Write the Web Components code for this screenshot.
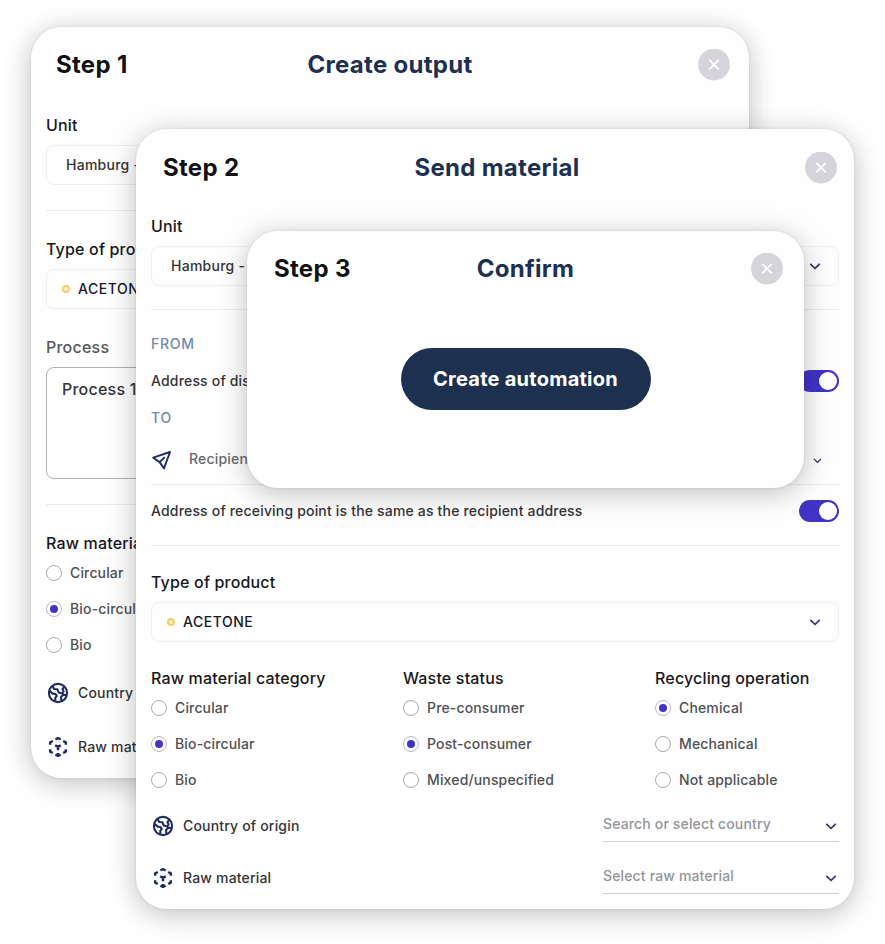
<!DOCTYPE html>
<html lang="en">
<head>
<meta charset="utf-8">
<title>Create automation</title>
<style>
  html, body { margin: 0; padding: 0; }
  body {
    position: relative;
    width: 885px;
    height: 944px;
    overflow: hidden;
    background: #fff;
    font-family: Inter, "Liberation Sans", sans-serif;
    --navy: #1d3050;
    --violet: #4033c6;
    --line: #ececef;
  }
  /* the three dialogs are stacked like windows */
  step-dialog { position: absolute; }
  #create { left: 31px; top: 27px; width: 718px; height: 751px; --head: 75px; --step-x: 25px; --close-x: 19px; }
  #send { left: 136px; top: 129px; width: 718px; height: 780px; --head: 77px; --step-x: 27px; --close-x: 17px; --title-shift: 4px; }
  #confirm { left: 247px; top: 231px; width: 557px; height: 257px; --head: 75px; --step-x: 27px; --close-x: 21px; }
</style>
</head>
<body>

<template id="tmpl-step-dialog">
  <style>
  :host {
    display: flex;
    flex-flow: column nowrap;
    box-sizing: border-box;
    border-radius: 31px;
    background: #fefefe;
    box-shadow: 0 0 3px rgba(30, 20, 40, 0.1), 0 5px 28px rgba(20, 15, 25, 0.27);
  }
  header {
    display: grid;
    grid-template-columns: 1fr auto 1fr;
    align-items: center;
    flex: none;
    height: var(--head);
    padding: 0 var(--close-x) 0 var(--step-x);
    font-size: 24px;
    font-weight: 700;
    line-height: 30px;
  }
  .step { color: #121214; letter-spacing: 0.3px; }
  .title {
    color: var(--navy);
    letter-spacing: 0.3px;
    /* the side paddings differ, this brings the title back to the middle */
    margin-right: calc(var(--step-x) - var(--close-x) - var(--title-shift, 0px));
  }
  .close {
    justify-self: end;
    display: block;
    width: 32px;
    height: 32px;
  }
  .body {
    flex: 1;
    display: flex;
    flex-flow: column nowrap;
    padding: 0 15px;
  }
  </style>
  <header>
    <span class="step"></span>
    <span class="title"></span>
    <svg class="close" viewBox="0 0 32 32">
      <circle cx="16" cy="15.5" r="16" fill="#d6d3db" style="r: 15.9px"/>
      <path d="M11.2 10.8l9.6 9.6M20.8 10.8l-9.6 9.6" stroke="#fff" stroke-width="1.9" fill="none"/>
    </svg>
  </header>
  <div class="body"><slot></slot></div>
</template>

<template id="tmpl-form-label">
  <style>
  :host {
    display: block;
    flex: none;
    height: 24px;
    margin-top: var(--gap, 24px);
    line-height: 24px;
    font-size: 16px;
    font-weight: 500;
    letter-spacing: 0.17px;
    color: #17171a;
    white-space: nowrap;
  }
  :host([muted]) { color: #55555a; font-weight: 450; letter-spacing: 0.22px; }
  :host([section]) { font-size: 14px; font-weight: 450; letter-spacing: 0.75px; color: #6f8ab0; }
  </style>
  <slot></slot>
</template>

<template id="tmpl-form-rule">
  <style>
  :host {
    display: block;
    flex: none;
    height: 1px;
    margin-top: var(--gap, 0px);
    background: var(--line);
  }
  </style>
</template>

<template id="tmpl-chevron">
  <style>
  :host { display: block; flex: none; width: 12px; height: 12px; }
  :host([small]) { width: 9px; height: 9px; }
  svg { display: block; width: 100%; height: 100%; }
  </style>
  <svg viewBox="0 0 12 12"><path d="M1.2 3.8L6 8.4l4.8-4.6" fill="none" stroke="#393268" stroke-width="1.6"/></svg>
</template>

<template id="tmpl-form-field">
  <style>
  :host {
    display: flex;
    flex: none;
    align-items: center;
    box-sizing: border-box;
    height: 40px;
    margin: 8px 0 0 0;
    padding: 0 17px 0 19px;
    border: 1px solid #efeff3;
    border-radius: 8px;
    font-size: 14px;
    font-weight: 450;
    letter-spacing: 0.25px;
    color: #333337;
    white-space: nowrap;
  }
  .text { margin-top: -2px; }
  :host([product]) { color: #17172c; padding-left: 15px; letter-spacing: 0.53px; }
  :host([area]) {
    align-items: flex-start;
    height: 112px;
    padding: 11px 15px;
    border-color: #b0b0b4;
    font-size: 16px;
    line-height: 24px;
    letter-spacing: 0.22px;
  }
  .dot { display: none; box-sizing: border-box; width: 8px; height: 8px; margin-right: 8px; border: 2px solid #fbcb66; border-radius: 50%; background: #fff3d6; }
  :host([product]) .dot { display: block; }
  chevron-icon { margin-left: auto; }
  :host([area]) chevron-icon { display: none; }
  </style>
  <span class="dot"></span>
  <span class="text"><slot></slot></span>
  <chevron-icon></chevron-icon>
</template>

<template id="tmpl-form-switch">
  <style>
  :host {
    display: flex;
    flex: none;
    align-items: center;
    justify-content: space-between;
    height: 36px;
    margin-top: var(--gap, 0px);
    font-size: 14px;
    font-weight: 450;
    letter-spacing: 0.18px;
    color: #333337;
  }
  .text { margin-top: -2px; }
  .track {
    display: flex;
    justify-content: flex-end;
    box-sizing: border-box;
    width: 40px;
    height: 22px;
    padding: 2px;
    border-radius: 11px;
    background: var(--violet);
  }
  .knob { width: 18px; height: 18px; border-radius: 50%; background: #fff; }
  </style>
  <span class="text"><slot></slot></span>
  <span class="track"><span class="knob"></span></span>
</template>

<template id="tmpl-radio-option">
  <style>
  :host {
    display: flex;
    align-items: center;
    gap: 8px;
    height: 36px;
    font-size: 14px;
    font-weight: 450;
    letter-spacing: 0.15px;
    color: #505055;
    white-space: nowrap;
  }
  .ring {
    display: grid;
    place-items: center;
    box-sizing: border-box;
    width: 16px;
    height: 16px;
    border: 1px solid #aaaaaf;
    border-radius: 50%;
  }
  .text { margin-top: -2px; }
  :host([checked]) .ring { border-color: #b9b4dc; }
  :host([checked]) .ring::after {
    content: "";
    width: 8px;
    height: 8px;
    border-radius: 50%;
    background: var(--violet);
  }
  </style>
  <span class="ring"></span>
  <span class="text"><slot></slot></span>
</template>

<template id="tmpl-icon-row">
  <style>
  :host {
    display: flex;
    flex: none;
    align-items: center;
    height: var(--row, 52px);
    font-size: 14px;
    font-weight: 450;
    letter-spacing: 0.18px;
    color: #333337;
    white-space: nowrap;
  }
  svg {
    display: none;
    width: 24px;
    height: 24px;
    margin-right: 8px;
    fill: none;
    stroke: #1f2c60;
    stroke-width: 2.1;
    stroke-linejoin: round;
  }
  .text { margin-top: -2px; }
  :host([icon="globe"]) .globe,
  :host([icon="cube"]) .cube,
  :host([icon="send"]) .send { display: block; }
  .cube { stroke-width: 2.5; }
  .send { stroke-width: 1.9; margin: 0 14px 0 0; }
  :host([icon="send"]) .text { margin-top: -3px; }
  .end { margin-left: auto; }
  </style>
  <svg class="globe" viewBox="0 0 24 24">
    <circle cx="12" cy="12" r="9.1"/>
    <path d="M3.2 9.6l3.6 3 2.6.4 1.4 1.8-1.6 2.2.2 3.6M6.6 5l1.6 3 3.2.3 1.4 3.2 3.6 1 1.2-2.2-1.2-2.2 2-2.4M20.8 14l-3.4-.2-2.3 2 .2 4.4"/>
  </svg>
  <svg class="cube" viewBox="0 0 24 24">
    <path d="M9.4 4.3L12 3.2l2.6 1.1M9.4 19.6l2.6 1.2 2.6-1.2M12 18V21M6.8 6L4.2 7.4v2.4M17.2 6l2.6 1.4v2.4M4.2 14.2v2.4L6.8 18M19.8 14.2v2.4L17.2 18M9.2 10.2l2.8 1.7 2.8-1.7M12 11.9v3.3"/>
  </svg>
  <svg class="send" viewBox="0 0 24 24">
    <path d="M2.2 9.7L19 4l-6 16.4-4.4-6.3zM8.6 14.1l5.2-5"/>
  </svg>
  <span class="text"><slot></slot></span>
  <span class="end"><slot name="end"></slot></span>
</template>

<template id="tmpl-line-select">
  <style>
  :host {
    display: flex;
    align-items: center;
    justify-content: space-between;
    box-sizing: border-box;
    width: 236px;
    height: 32px;
    padding: 0 2px 0 0;
    border-bottom: 1px solid #cfcfd8;
    font-size: 14px;
    font-weight: 450;
    letter-spacing: 0.15px;
    line-height: 28px;
    color: #949498;
  }
  span { margin-bottom: 3px; }
  </style>
  <span><slot></slot></span>
  <chevron-icon></chevron-icon>
</template>

<template id="tmpl-pill-button">
  <style>
  :host {
    display: grid;
    place-items: center;
    width: 250px;
    height: 62px;
    border-radius: 31px;
    background: var(--navy);
    color: #fff;
    font-size: 20px;
    font-weight: 700;
    letter-spacing: 0.25px;
  }
  </style>
  <slot></slot>
</template>

<template id="tmpl-radio-columns">
  <style>
  :host { display: grid; flex: none; grid-template-columns: repeat(auto-fill, 252px); width: 756px; }
  </style>
  <slot></slot>
</template>

<template id="tmpl-confirm-pane">
  <style>
  :host { display: flex; justify-content: center; padding-top: 42px; }
  </style>
  <slot></slot>
</template>

<step-dialog id="create" step="Step 1" title-text="Create output">
  <form-label style="--gap: 11px">Unit</form-label>
  <form-field>Hamburg -</form-field>
  <form-rule style="--gap: 25px"></form-rule>
  <form-label style="--gap: 26px">Type of product</form-label>
  <form-field product>ACETONE</form-field>
  <form-label muted style="--gap: 26px">Process</form-label>
  <form-field area>Process 1</form-field>
  <form-rule style="--gap: 25px"></form-rule>
  <form-label style="--gap: 26px">Raw material category</form-label>
  <radio-option>Circular</radio-option>
  <radio-option checked>Bio-circular</radio-option>
  <radio-option>Bio</radio-option>
  <icon-row icon="globe" style="--row: 54px; margin-top: 3px">Country of origin</icon-row>
  <icon-row icon="cube" style="--row: 54px">Raw material</icon-row>
</step-dialog>

<step-dialog id="send" step="Step 2" title-text="Send material">
  <form-label style="--gap: 8px">Unit</form-label>
  <form-field>Hamburg -</form-field>
  <form-rule style="--gap: 23px"></form-rule>
  <form-label section style="--gap: 22px">FROM</form-label>
  <form-switch style="--gap: 7px">Address of dispatch</form-switch>
  <form-label section style="--gap: 7px">TO</form-label>
  <icon-row icon="send" style="--row: 48px; margin-top: 6px; padding-right: 17px; color: #68686d">Recipient<chevron-icon slot="end" small></chevron-icon></icon-row>
  <form-rule></form-rule>
  <form-switch style="--gap: 8px">Address of receiving point is the same as the recipient address</form-switch>
  <form-rule style="--gap: 16px"></form-rule>
  <form-label>Type of product</form-label>
  <form-field product>ACETONE</form-field>
  <radio-columns>
    <div>
      <form-label>Raw material category</form-label>
      <radio-option>Circular</radio-option>
      <radio-option checked>Bio-circular</radio-option>
      <radio-option>Bio</radio-option>
    </div>
    <div>
      <form-label>Waste status</form-label>
      <radio-option>Pre-consumer</radio-option>
      <radio-option checked>Post-consumer</radio-option>
      <radio-option>Mixed/unspecified</radio-option>
    </div>
    <div>
      <form-label>Recycling operation</form-label>
      <radio-option checked>Chemical</radio-option>
      <radio-option>Mechanical</radio-option>
      <radio-option>Not applicable</radio-option>
    </div>
  </radio-columns>
  <icon-row icon="globe" style="margin-top: 2px">Country of origin<line-select slot="end">Search or select country</line-select></icon-row>
  <icon-row icon="cube">Raw material<line-select slot="end">Select raw material</line-select></icon-row>
</step-dialog>

<step-dialog id="confirm" step="Step 3" title-text="Confirm">
  <confirm-pane><pill-button>Create automation</pill-button></confirm-pane>
</step-dialog>

<script>
function cloneTemplate(id) {
  return document.importNode(document.querySelector('#' + id).content, true);
}

// elements that are only markup, styles and a slot
function definePlain(name, tmpl) {
  customElements.define(name, class extends HTMLElement {
    constructor() {
      super();
      this.attachShadow({ mode: 'open' }).append(cloneTemplate(tmpl));
    }
  });
}

definePlain('chevron-icon', 'tmpl-chevron');
definePlain('form-label', 'tmpl-form-label');
definePlain('form-rule', 'tmpl-form-rule');
definePlain('form-field', 'tmpl-form-field');
definePlain('form-switch', 'tmpl-form-switch');
definePlain('radio-option', 'tmpl-radio-option');
definePlain('radio-columns', 'tmpl-radio-columns');
definePlain('icon-row', 'tmpl-icon-row');
definePlain('line-select', 'tmpl-line-select');
definePlain('pill-button', 'tmpl-pill-button');
definePlain('confirm-pane', 'tmpl-confirm-pane');

customElements.define('step-dialog', class StepDialog extends HTMLElement {
  static get observedAttributes() {
    return ['step', 'title-text'];
  }
  constructor() {
    super();
    this.root = this.attachShadow({ mode: 'open' });
    this.root.append(cloneTemplate('tmpl-step-dialog'));
  }
  attributeChangedCallback(attrName, oldVal, newVal) {
    const part = attrName === 'step' ? '.step' : '.title';
    this.root.querySelector(part).textContent = newVal;
  }
});
</script>
</body>
</html>
